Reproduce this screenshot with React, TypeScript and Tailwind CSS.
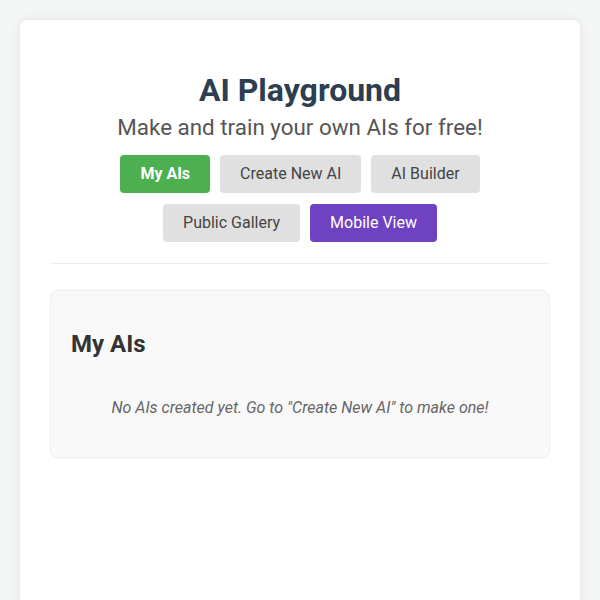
export default function App() {
  const buttons = [
    { label: "My AIs", cls: "bg-[#4CAF50] text-white font-bold" },
    { label: "Create New AI", cls: "bg-[#e0e0e0] text-[#444]" },
    { label: "AI Builder", cls: "bg-[#e0e0e0] text-[#444]" },
    { label: "Public Gallery", cls: "bg-[#e0e0e0] text-[#444]" },
    { label: "Mobile View", cls: "bg-[#6f42c1] text-white" },
  ];
  return (
    <div className="min-h-[600px] bg-[#f4f5f5] pt-[20px] px-[20px]" style={{ fontFamily: "Roboto, 'Noto Sans', sans-serif" }}>
      <div className="bg-white rounded-lg shadow-[0_0_10px_rgba(0,0,0,0.08)] px-[30px] pt-[51px] min-h-[600px]">
        <div className="text-center pb-[16px] border-b border-[#eee]">
          <h1 className="text-[32px] leading-[38px] font-bold text-[#2c3e50]">AI Playground</h1>
          <p className="mt-[4px] text-[22.4px] leading-[28px] text-[#555]">Make and train your own AIs for free!</p>
          <div className="mt-[8px] flex flex-wrap justify-center">
            {buttons.map((b) => (
              <button key={b.label} className={`mx-[5px] my-[5.5px] h-[38px] px-[20px] rounded-[4px] text-[16px] ${b.cls}`}>
                {b.label}
              </button>
            ))}
          </div>
        </div>
        <div className="mt-[26px] bg-[#f9f9f9] border border-[#eee] rounded-lg p-[20px]">
          <h2 className="my-[19px] text-[24px] leading-[29px] font-bold text-[#333]">My AIs</h2>
          <p className="p-[20px] text-center italic text-[16px] leading-[19px] text-[#666]">No AIs created yet. Go to "Create New AI" to make one!</p>
        </div>
      </div>
    </div>
  );
}
